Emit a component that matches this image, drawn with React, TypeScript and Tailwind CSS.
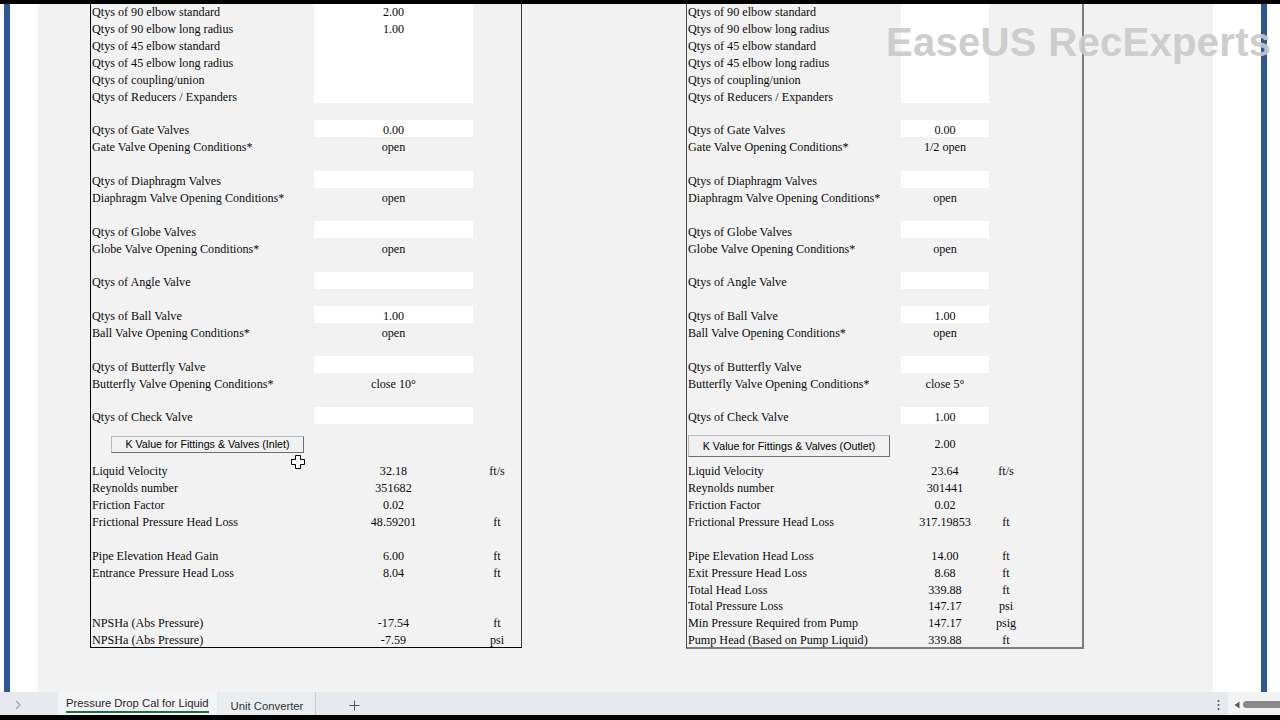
import React from "react";

type R = { label?: string; value?: string; unit?: string; white?: boolean };

const topLeft: R[] = [
  { label: "Qtys of 90 elbow standard", value: "2.00", white: true },
  { label: "Qtys of 90 elbow long radius", value: "1.00", white: true },
  { label: "Qtys of 45 elbow standard", white: true },
  { label: "Qtys of 45 elbow long radius", white: true },
  { label: "Qtys of coupling/union", white: true },
  { label: "Qtys of Reducers / Expanders", white: true },
  {},
  { label: "Qtys of Gate Valves", value: "0.00", white: true },
  { label: "Gate Valve Opening Conditions*", value: "open" },
  {},
  { label: "Qtys of Diaphragm Valves", white: true },
  { label: "Diaphragm Valve Opening Conditions*", value: "open" },
  {},
  { label: "Qtys of Globe Valves", white: true },
  { label: "Globe Valve Opening Conditions*", value: "open" },
  {},
  { label: "Qtys of Angle Valve", white: true },
  {},
  { label: "Qtys of Ball Valve", value: "1.00", white: true },
  { label: "Ball Valve Opening Conditions*", value: "open" },
  {},
  { label: "Qtys of Butterfly Valve", white: true },
  { label: "Butterfly Valve Opening Conditions*", value: "close 10°" },
  {},
  { label: "Qtys of Check Valve", white: true },
];

const topRight: R[] = [
  { label: "Qtys of 90 elbow standard", white: true },
  { label: "Qtys of 90 elbow long radius", white: true },
  { label: "Qtys of 45 elbow standard", white: true },
  { label: "Qtys of 45 elbow long radius", white: true },
  { label: "Qtys of coupling/union", white: true },
  { label: "Qtys of Reducers / Expanders", white: true },
  {},
  { label: "Qtys of Gate Valves", value: "0.00", white: true },
  { label: "Gate Valve Opening Conditions*", value: "1/2 open" },
  {},
  { label: "Qtys of Diaphragm Valves", white: true },
  { label: "Diaphragm Valve Opening Conditions*", value: "open" },
  {},
  { label: "Qtys of Globe Valves", white: true },
  { label: "Globe Valve Opening Conditions*", value: "open" },
  {},
  { label: "Qtys of Angle Valve", white: true },
  {},
  { label: "Qtys of Ball Valve", value: "1.00", white: true },
  { label: "Ball Valve Opening Conditions*", value: "open" },
  {},
  { label: "Qtys of Butterfly Valve", white: true },
  { label: "Butterfly Valve Opening Conditions*", value: "close 5°" },
  {},
  { label: "Qtys of Check Valve", value: "1.00", white: true },
];

const botLeft: R[] = [
  { label: "Liquid Velocity", value: "32.18", unit: "ft/s" },
  { label: "Reynolds number", value: "351682" },
  { label: "Friction Factor", value: "0.02" },
  { label: "Frictional Pressure Head Loss", value: "48.59201", unit: "ft" },
  {},
  { label: "Pipe Elevation Head Gain", value: "6.00", unit: "ft" },
  { label: "Entrance Pressure Head Loss", value: "8.04", unit: "ft" },
  {},
  {},
  { label: "NPSHa (Abs Pressure)", value: "-17.54", unit: "ft" },
  { label: "NPSHa (Abs Pressure)", value: "-7.59", unit: "psi" },
];

const botRight: R[] = [
  { label: "Liquid Velocity", value: "23.64", unit: "ft/s" },
  { label: "Reynolds number", value: "301441" },
  { label: "Friction Factor", value: "0.02" },
  { label: "Frictional Pressure Head Loss", value: "317.19853", unit: "ft" },
  {},
  { label: "Pipe Elevation Head Loss", value: "14.00", unit: "ft" },
  { label: "Exit Pressure Head Loss", value: "8.68", unit: "ft" },
  { label: "Total Head Loss", value: "339.88", unit: "ft" },
  { label: "Total Pressure Loss", value: "147.17", unit: "psi" },
  { label: "Min Pressure Required from Pump", value: "147.17", unit: "psig" },
  { label: "Pump Head (Based on Pump Liquid)", value: "339.88", unit: "ft" },
];

function LeftRow({ r, top }: { r: R; top: boolean }) {
  return (
    <div className={top ? "flex h-[16.875px]" : "flex h-[16.9px]"}>
      <div className="w-[223px] flex items-center pt-[4px] pl-[1px] whitespace-nowrap">{r.label}</div>
      <div className={r.white ? "w-[159px] flex items-center justify-center pt-[4px] bg-white" : "w-[159px] flex items-center justify-center pt-[4px]"}>{r.value}</div>
      <div className="w-[48px] flex items-center justify-center pt-[4px]">{r.unit}</div>
    </div>
  );
}

function RightRow({ r, top }: { r: R; top: boolean }) {
  return (
    <div className={top ? "flex h-[16.875px]" : "flex h-[16.9px]"}>
      <div className="w-[214px] flex items-center pt-[4px] pl-[1px] whitespace-nowrap">{r.label}</div>
      <div className={r.white ? "w-[88px] flex items-center justify-center pt-[4px] bg-white" : "w-[88px] flex items-center justify-center pt-[4px]"}>{r.value}</div>
      <div className="w-[34px] flex items-center justify-center pt-[4px]">{r.unit}</div>
      <div className="flex-1" />
    </div>
  );
}

function XlButton({ text, cls }: { text: string; cls: string }) {
  return (
    <div
      className={
        "flex items-center justify-center bg-[#f0f0f0] border border-[#b9b9b9] border-r-[#6e6e6e] border-b-[#6e6e6e] font-['Liberation_Sans',Arial,sans-serif] text-[10.7px] text-black whitespace-nowrap " +
        cls
      }
    >
      {text}
    </div>
  );
}

function LeftPanel() {
  return (
    <div className="w-[432px] -mt-[2px] border-l border-r border-b border-l-black border-r-[#3a3a3a] border-b-black shrink-0">
      {topLeft.map((r, i) => (
        <LeftRow key={i} r={r} top />
      ))}
      <div className="flex h-[37.1px]">
        <div className="w-[223px] pl-[20px] pt-[12px]">
          <XlButton text="K Value for Fittings & Valves (Inlet)" cls="w-[193px] h-[17px]" />
        </div>
      </div>
      {botLeft.map((r, i) => (
        <LeftRow key={i} r={r} top={false} />
      ))}
    </div>
  );
}

function RightPanel() {
  return (
    <div className="w-[398px] -mt-[2px] border-l border-l-[#4a4a4a] border-r-2 border-r-[#7d7d7d] border-b-2 border-b-[#7d7d7d] shrink-0">
      {topRight.map((r, i) => (
        <RightRow key={i} r={r} top />
      ))}
      <div className="flex h-[37.1px]">
        <div className="w-[214px] pl-[1px] pt-[11px]">
          <XlButton text="K Value for Fittings & Valves (Outlet)" cls="w-[202px] h-[22px]" />
        </div>
        <div className="w-[88px] flex items-center justify-center pt-[4px]">2.00</div>
      </div>
      {botRight.map((r, i) => (
        <RightRow key={i} r={r} top={false} />
      ))}
    </div>
  );
}

function TabBar() {
  return (
    <div className="h-[23px] shrink-0 flex items-stretch bg-[#e6e9ed] font-['Liberation_Sans',Arial,sans-serif] text-[11.3px] text-[#222]">
      <div className="w-[58px] flex items-center pl-[14px] pt-[2px]">
        <svg width="8" height="10" viewBox="0 0 8 10">
          <path d="M2 1 L6 5 L2 9" fill="none" stroke="#a0a5aa" strokeWidth="1.2" />
        </svg>
      </div>
      <div className="flex items-end px-[8px] pb-[2px] bg-[#f3f4f6]">
        <span className="leading-[14px] pb-[1px] border-b-2 border-[#1e6e42] text-[#1f1f1f]">Pressure Drop Cal for Liquid</span>
      </div>
      <div className="w-[2px]" />
      <div className="flex items-center px-[12px] pt-[6px] bg-[#eaedf0] border-r border-[#c9ccd0] text-[#333]">Unit Converter</div>
      <div className="w-[76px] flex items-center justify-center pt-[3px]">
        <svg width="11" height="11" viewBox="0 0 11 11">
          <path d="M5.5 0.5 V10.5 M0.5 5.5 H10.5" stroke="#555" strokeWidth="1" />
        </svg>
      </div>
      <div className="flex-1" />
      <div className="w-[20px] flex items-center justify-center pt-[2px]">
        <svg width="3" height="12" viewBox="0 0 3 12">
          <circle cx="1.5" cy="2" r="1" fill="#555" />
          <circle cx="1.5" cy="6" r="1" fill="#555" />
          <circle cx="1.5" cy="10" r="1" fill="#555" />
        </svg>
      </div>
      <div className="w-[52px] flex items-center bg-[#f2f3f5] pl-[6px] pt-[2px] gap-[3px]">
        <svg width="6" height="8" viewBox="0 0 6 8">
          <path d="M5.5 0.5 L0.5 4 L5.5 7.5 Z" fill="#5a5a5a" />
        </svg>
        <div className="flex-1 h-[7px] rounded-l-full bg-[#8a8a8a]" />
      </div>
    </div>
  );
}

export default function App() {
  return (
    <div className="relative w-[1280px] h-[720px] overflow-hidden bg-black flex flex-col font-['Liberation_Serif','Times_New_Roman',serif] text-[12.15px] text-[#0a0a0a]">
      <div className="h-[4px] bg-black shrink-0" />
      <div className="h-[688px] flex shrink-0 overflow-hidden">
        <div className="w-[4px] bg-white" />
        <div className="w-[6px] bg-[#2b5797]" />
        <div className="w-[28px] bg-white" />
        <div className="w-[1175px] bg-[#f2f2f2] flex items-start pl-[52px] gap-[164px]">
          <LeftPanel />
          <RightPanel />
        </div>
        <div className="w-[48px] bg-white" />
        <div className="w-[6px] bg-[#2b5797]" />
        <div className="flex-1 bg-white" />
      </div>
      <TabBar />
      <div className="flex-1 bg-black" />

      <div className="absolute left-[886px] top-[22px] font-['Liberation_Sans',Arial,sans-serif] font-bold text-[40px] tracking-[0.3px] leading-none text-[#c9c9c9] opacity-90 whitespace-nowrap pointer-events-none">
        EaseUS RecExperts
      </div>

      <svg className="absolute left-[291px] top-[455px]" width="14" height="14" viewBox="0 0 14 14">
        <path
          d="M4.5 0.5 H9.5 V4.5 H13.5 V9.5 H9.5 V13.5 H4.5 V9.5 H0.5 V4.5 H4.5 Z"
          fill="#fff"
          stroke="#000"
          strokeWidth="1"
        />
      </svg>
    </div>
  );
}
